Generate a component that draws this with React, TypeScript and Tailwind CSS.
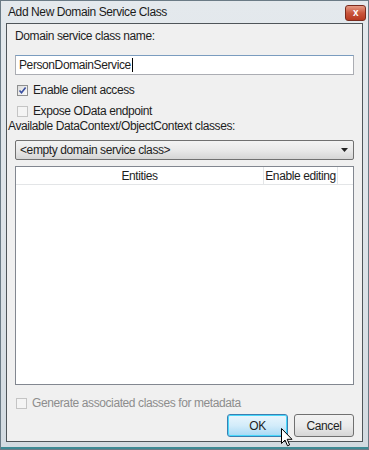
import React from 'react';

const font = { fontFamily: '"Liberation Sans", Arial, sans-serif' };

const CheckBox: React.FC<{ checked?: boolean; disabled?: boolean }> = ({ checked, disabled }) => (
  <span
    className={`flex h-[11px] w-[11px] shrink-0 items-center justify-center border ${
      disabled ? 'border-[#c4c4c4] bg-[#f4f4f4]' : 'border-[#8e8f8f] bg-gradient-to-br from-[#dcdcdc] to-[#fbfbfb]'
    }`}
  >
    {checked && (
      <svg width="9" height="9" viewBox="0 0 9 9">
        <path d="M1.5 4.5 L3.5 6.8 L7.6 1.6" fill="none" stroke="#3a4fa0" strokeWidth="1.6" />
      </svg>
    )}
  </span>
);

const App: React.FC = () => {
  return (
    <div className="h-[450px] w-[369px] overflow-hidden bg-white tracking-[-0.4px]" style={font}>
      <div className="flex h-[450px] w-[369px] flex-col border border-[#6b7b86] bg-gradient-to-b from-[#e4e9ed] via-[#dde3e8] to-[#d3dbe1]">
        {/* title bar */}
        <div className="flex h-[22px] shrink-0 items-center justify-between pl-[7px] pr-[2px]">
          <span className="text-[12px] text-[#1b1b1b]">Add New Domain Service Class</span>
          <button className="mt-[2px] flex h-[16px] w-[21px] items-center justify-center rounded-[3px] border border-[#7a2b1e] bg-gradient-to-b from-[#e59a85] via-[#c9553c] to-[#b7381f] text-[10px] font-bold leading-none text-white">
            x
          </button>
        </div>

        {/* client area */}
        <div className="mx-[5px] flex flex-1 flex-col border border-[#4f5559] bg-[#f0f0f0] px-[8px] text-[12px] text-[#1e1e1e]">
          <div className="mt-[5px] h-[15px] leading-[15px]">Domain service class name:</div>
          <div className="mt-[11px] flex h-[20px] items-center border border-[#abadb3] border-t-[#7a9cbf] bg-white pl-[3px]">
            PersonDomainService
            <span className="ml-[1px] h-[14px] w-px bg-black" />
          </div>
          <label className="mt-[8px] flex h-[14px] items-center gap-[5px] pl-[2px]">
            <CheckBox checked />
            Enable client access
          </label>
          <label className="mt-[7px] flex h-[14px] items-center gap-[5px] pl-[2px]">
            <CheckBox disabled />
            Expose OData endpoint
          </label>
          <div className="ml-[-7px] mt-[1px] h-[15px] leading-[15px]">Available DataContext/ObjectContext classes:</div>
          <div className="mt-[6px] flex h-[20px] items-center justify-between rounded-[2px] border border-[#707070] bg-gradient-to-b from-[#f3f3f3] via-[#e9e9e9] to-[#d5d5d5] pl-[4px] pr-[5px]">
            <span>&lt;empty domain service class&gt;</span>
            <svg width="7" height="4" viewBox="0 0 7 4">
              <path d="M0 0 H7 L3.5 4 Z" fill="#222" />
            </svg>
          </div>
          <div className="mt-[6px] flex h-[219px] flex-col border border-[#828790] bg-white">
            <div className="flex h-[18px] border-b border-[#e3e5e7]">
              <div className="flex flex-1 items-center justify-center border-r border-[#e3e5e7]">Entities</div>
              <div className="flex w-[74px] items-center justify-center whitespace-nowrap border-r border-[#e3e5e7]">
                Enable editing
              </div>
              <div className="w-[15px]" />
            </div>
          </div>
          <label className="mt-[11px] flex h-[14px] items-center gap-[5px] pl-[1px] text-[#8d8d8d]">
            <CheckBox disabled />
            Generate associated classes for metadata
          </label>
          <div className="mt-[4px] flex justify-end gap-[6px]">
            <button className="relative flex h-[23px] w-[61px] items-center justify-center rounded-[3px] border border-[#3c7fb1] bg-gradient-to-b from-[#eaf6fd] via-[#d3ecfa] to-[#a7d9f5] text-[#1e1e1e] shadow-[inset_0_0_0_1px_#48d8fb]">
              OK
              <svg className="absolute left-[53px] top-[13px]" width="12" height="19" viewBox="0 0 12 19">
                <path d="M0.5 0.5 V15.5 L4 12 L6.5 17.8 L8.6 16.9 L6.2 11.3 H11 Z" fill="#fff" stroke="#000" strokeWidth="1" />
              </svg>
            </button>
            <button className="flex h-[23px] w-[60px] items-center justify-center rounded-[3px] border border-[#707070] bg-gradient-to-b from-[#f2f2f2] via-[#ebebeb] to-[#d6d6d6] text-[#1e1e1e]">
              Cancel
            </button>
          </div>
        </div>
        <div className="h-[5px] shrink-0" />
        <div className="h-[2px] shrink-0 bg-[#3e8a94]" />
      </div>
    </div>
  );
};

export default App;
